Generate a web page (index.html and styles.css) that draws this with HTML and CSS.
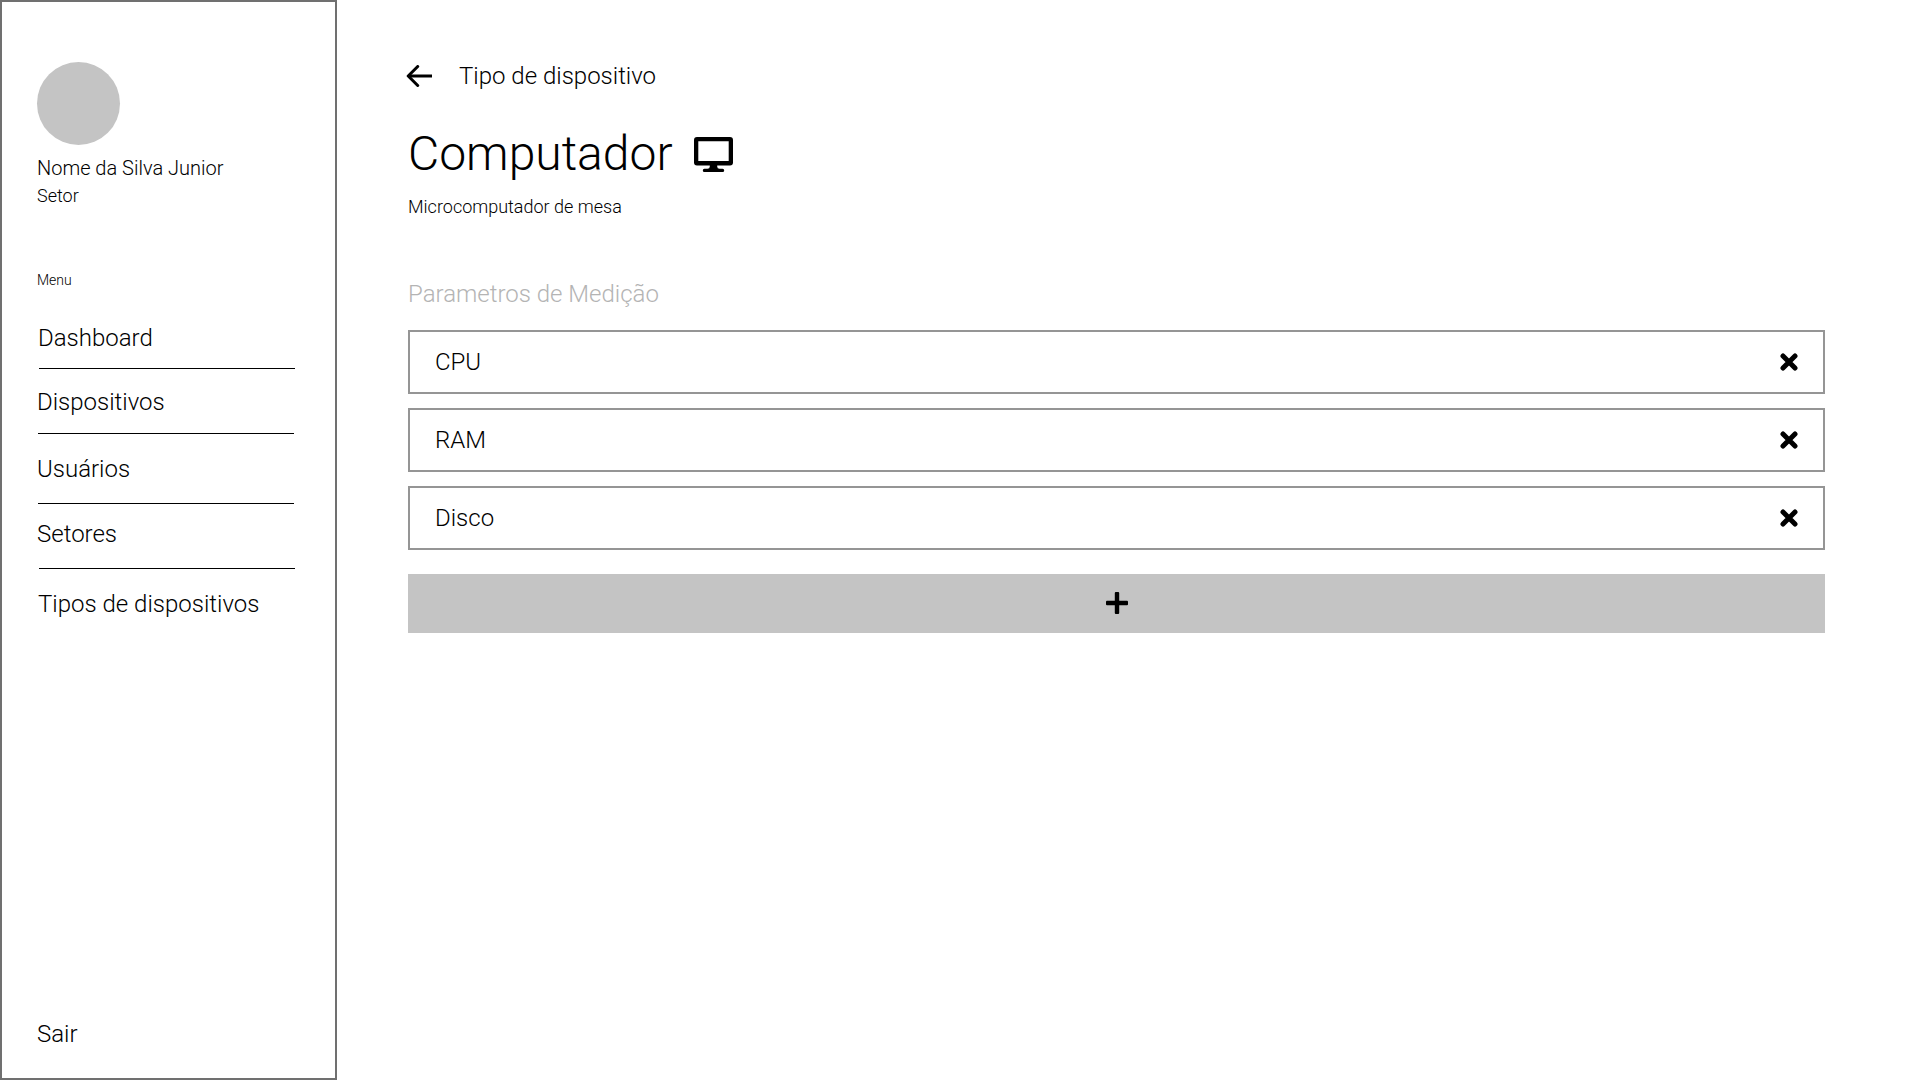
FILE: index.html
```html
<!DOCTYPE html>
<html lang="pt-BR">
<head>
<meta charset="utf-8">
<title>Tipo de dispositivo</title>
<link rel="stylesheet" href="styles.css">
</head>
<body>
<aside class="sidebar">
  <div class="avatar"></div>
  <div class="user-name">Nome da Silva Junior</div>
  <div class="user-sector">Setor</div>
  <div class="menu-label">Menu</div>
  <nav class="menu">
    <a class="item dashboard">Dashboard</a>
    <a class="item devices">Dispositivos</a>
    <a class="item users">Usuários</a>
    <a class="item sectors">Setores</a>
    <a class="item types">Tipos de dispositivos</a>
  </nav>
  <a class="logout">Sair</a>
</aside>
<main class="content">
  <div class="breadcrumb">
    <svg class="back" viewBox="0 0 26 22" fill="none" stroke="#000" stroke-width="3" stroke-linecap="round" stroke-linejoin="round"><path d="M11.700 1.500 2.200 11l9.500 9.500"/><path d="M2.500 11H26" stroke-linecap="butt"/></svg>
    <span>Tipo de dispositivo</span>
  </div>
  <div class="heading">
    <h1>Computador</h1>
    <svg class="monitor" viewBox="0 0 39 35"><path fill-rule="evenodd" d="M3 0H36a3 3 0 0 1 3 3V25.500a3 3 0 0 1-3 3H23.200V29.500Q23.200 31.800 25.500 31.800H28.600a1.600 1.600 0 0 1 0 3.200H10.400a1.600 1.600 0 0 1 0-3.200H13.500Q15.800 31.800 15.800 29.500V28.500H3a3 3 0 0 1-3-3V3a3 3 0 0 1 3-3ZM4.300 4.200V24H34.700V4.200Z"/></svg>
  </div>
  <p class="description">Microcomputador de mesa</p>
  <h2>Parametros de Medição</h2>
  <ul class="params">
    <li><span>CPU</span><svg class="remove" viewBox="0 0 18 18"><path d="M3 3 15 15M15 3 3 15"/></svg></li>
    <li><span>RAM</span><svg class="remove" viewBox="0 0 18 18"><path d="M3 3 15 15M15 3 3 15"/></svg></li>
    <li><span>Disco</span><svg class="remove" viewBox="0 0 18 18"><path d="M3 3 15 15M15 3 3 15"/></svg></li>
  </ul>
  <button class="add" aria-label="Adicionar"><svg viewBox="0 0 22 22"><rect x="8.800" width="4.400" height="22" rx="1"/><rect y="8.800" width="22" height="4.400" rx="1"/></svg></button>
</main>
</body>
</html>
```
FILE: styles.css
```css
* { box-sizing: border-box; }
body {
  margin: 0;
  display: flex;
  height: 1080px;
  overflow: hidden;
  background: #fff;
  color: #000;
  font-family: Roboto, sans-serif;
  font-weight: 300;
  font-size: 24px;
  line-height: 28px;
}
svg { display: block; flex: none; }
.sidebar {
  width: 337px;
  flex: none;
  border: 2px solid #707070;
  padding: 60px 35px 30px;
  display: flex;
  flex-direction: column;
}
.avatar { width: 83px; height: 83px; border-radius: 50%; background: #c4c4c4; flex: none; }
.user-name { margin-top: 11px; font-size: 20px; line-height: 24px; }
.user-sector { margin-top: 5px; font-size: 18px; line-height: 22px; }
.menu-label { margin-top: 65px; font-size: 14px; line-height: 16px; }
.menu { display: flex; flex-direction: column; margin-top: 36px; width: 258px; }
.item { border-bottom: 1px solid #000; margin-left: 1px; width: 256px; text-indent: -1px; }
.dashboard { height: 45px; margin-left: 2px; }
.devices { height: 46px; margin-top: 19px; }
.users { height: 49px; margin-top: 21px; }
.sectors { height: 49px; margin-top: 16px; margin-left: 2px; text-indent: -2px; }
.types { margin-top: 21px; border: 0; text-indent: 0; }
.logout { margin-top: auto; }
.content { flex: 1; padding: 62px 95px 0 71px; }
.breadcrumb { display: flex; align-items: center; gap: 27px; margin-left: -2px; }
.back { width: 26px; height: 22px; }
.heading { display: flex; align-items: center; gap: 21px; height: 56px; margin-top: 36px; }
h1 { margin: 0; font-size: 48px; line-height: 56px; font-weight: 300; }
.monitor { width: 39px; height: 35px; margin-top: 1px; }
.description { margin: 14px 0 0; font-size: 18px; line-height: 22px; }
h2 { margin: 62px 0 0; font-size: 24px; line-height: 28px; font-weight: 300; color: #b4b4b4; }
.params { list-style: none; margin: 22px 0 0; padding: 0; display: flex; flex-direction: column; gap: 14px; }
.params li {
  height: 64px;
  border: 2px solid #959595;
  padding: 0 25.5px 0 25px;
  display: flex;
  align-items: center;
  justify-content: space-between;
}
.remove { width: 18px; height: 18px; margin-bottom: 1px; fill: none; stroke: #000; stroke-width: 5; stroke-linecap: round; }
.add {
  display: flex;
  align-items: center;
  justify-content: center;
  width: 100%;
  height: 59px;
  margin-top: 24px;
  padding: 0 0 1px;
  border: 0;
  background: #c4c4c4;
}
.add svg { width: 22px; height: 22px; }
```
